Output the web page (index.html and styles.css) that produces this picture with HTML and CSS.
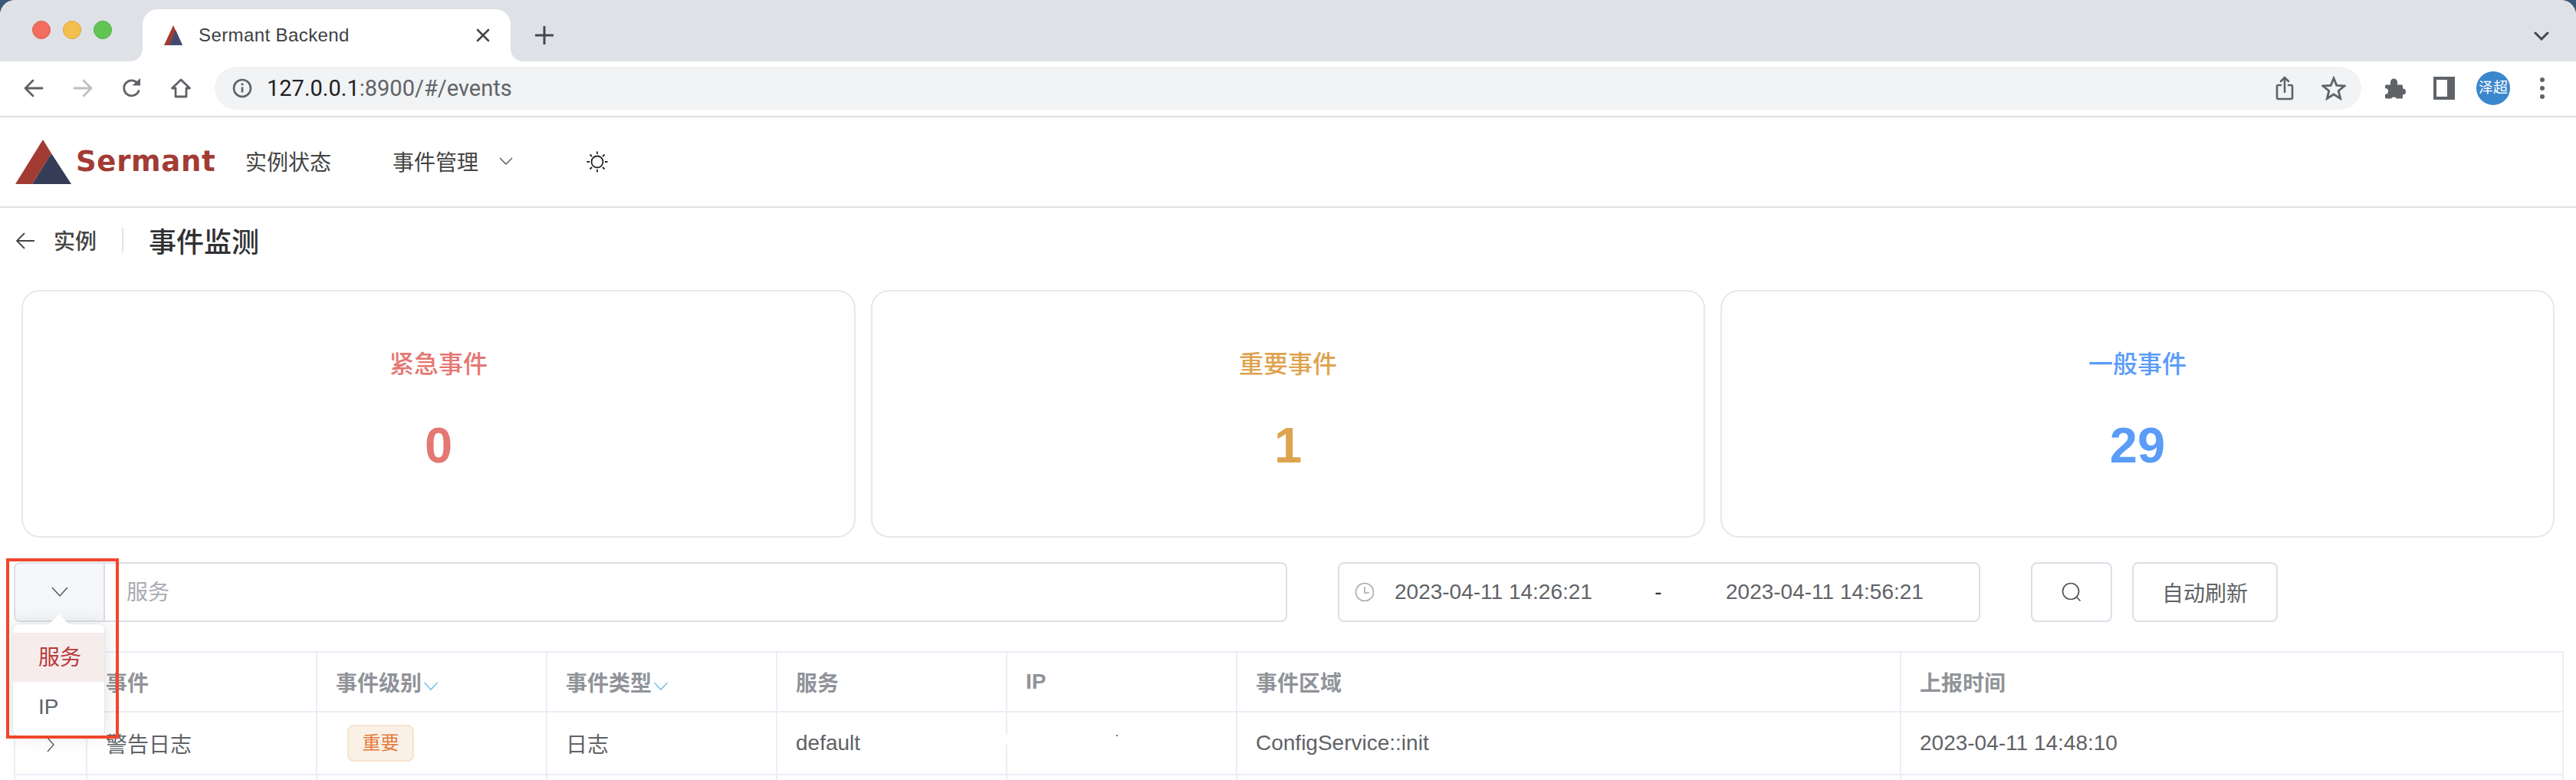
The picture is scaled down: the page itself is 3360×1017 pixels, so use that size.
FILE: index.html
```html
<!DOCTYPE html>
<html lang="zh">
  <head>
    <meta charset="UTF-8" />
    <title>Sermant Backend</title>
    <link rel="stylesheet" href="styles.css">
  </head>
  <body>
    <div class="window">
      <div class="tabstrip">
        <div class="lights">
          <span class="light light-red"></span>
          <span class="light light-yellow"></span>
          <span class="light light-green"></span>
        </div>
        <div class="tab">
          <svg class="favicon" viewBox="0 0 24 28"><polygon points="12,1 0,27 24,27" fill="#a23b34"/><polygon points="15,7 24,27 7,27" fill="#424c70"/></svg>
          <span class="tab-title">Sermant Backend</span>
          <svg class="tab-close" viewBox="0 0 18 18"><path d="M2 2l14 14M16 2L2 16" stroke="#45474b" stroke-width="2.6" stroke-linecap="round"/></svg>
        </div>
        <svg class="new-tab" viewBox="0 0 24 24"><path d="M12 1v22M1 12h22" stroke="#45474b" stroke-width="3" stroke-linecap="round"/></svg>
        <svg class="tab-list" viewBox="0 0 20 12"><path d="M2 2l8 8 8-8" fill="none" stroke="#45474b" stroke-width="3" stroke-linecap="round"/></svg>
      </div>

      <div class="toolbar">
        <span class="tool"><svg viewBox="0 0 28 28" width="28" height="28"><path d="M25 14H4M13 4L3 14l10 10" fill="none" stroke="#5f6368" stroke-width="2.8" stroke-linecap="round" stroke-linejoin="round"/></svg></span>
        <span class="tool"><svg viewBox="0 0 28 28" width="28" height="28"><path d="M3 14h21M15 4l10 10-10 10" fill="none" stroke="#bdbfc2" stroke-width="2.8" stroke-linecap="round" stroke-linejoin="round"/></svg></span>
        <span class="tool"><svg viewBox="0 0 28 28" width="28" height="28"><path d="M23 17.500A10 10 0 1 1 21 7" fill="none" stroke="#5f6368" stroke-width="2.800" stroke-linecap="round"/><polygon points="14.500,10.500 25,10.500 25,1" fill="#5f6368"/></svg></span>
        <span class="tool"><svg viewBox="0 0 28 28" width="28" height="28"><path d="M14 3L2.500 14H7v11h14V14h4.500z" fill="none" stroke="#5f6368" stroke-width="2.800" stroke-linejoin="round"/></svg></span>
        <div class="address">
          <svg class="info" viewBox="0 0 26 26"><circle cx="13" cy="13" r="11" fill="none" stroke="#5f6368" stroke-width="2.600"/><path d="M13 11.500v7" stroke="#5f6368" stroke-width="2.600"/><circle cx="13" cy="7.800" r="1.600" fill="#5f6368"/></svg>
          <span class="url"><span class="url-host">127.0.0.1</span>:8900/#/events</span>
          <span class="address-icons">
            <span class="tool"><svg viewBox="0 0 24 32" width="24" height="32"><path d="M7 12H3.500A1.500 1.500 0 0 0 2 13.500v15A1.500 1.500 0 0 0 3.500 30h17a1.500 1.500 0 0 0 1.500-1.500v-15a1.500 1.500 0 0 0-1.500-1.500H17M12 21V3M7 7l5-5 5 5" fill="none" stroke="#5f6368" stroke-width="2.600" stroke-linecap="round"/></svg></span>
            <span class="tool"><svg viewBox="0 0 32 32" width="32" height="32"><polygon points="16,3 19.800,12.300 30,13 22.200,19.500 24.700,29.500 16,24 7.300,29.500 9.800,19.500 2,13 12.200,12.300" fill="none" stroke="#5f6368" stroke-width="2.800" stroke-linejoin="miter"/></svg></span>
          </span>
        </div>
        <span class="tool tool-ext"><svg viewBox="0 0 30 30" width="30" height="30"><path d="M2 12a1.500 1.500 0 0 1 1.500-1.500H9V7a4.500 4.500 0 0 1 9 0v3.500h5.500A1.500 1.500 0 0 1 25 12v3.500a4 4 0 0 1 0 8V27a1.500 1.500 0 0 1-1.500 1.500H17a4 4 0 0 0-7 0H3.500A1.500 1.500 0 0 1 2 27v-4a4 4 0 0 0 2-7.500 4 4 0 0 0-2-.5z" fill="#5f6368"/></svg></span>
        <span class="tool"><svg viewBox="0 0 28 30" width="28" height="30"><rect width="28" height="30" fill="#5f6368"/><rect x="4" y="4" width="14" height="22" fill="#fff"/></svg></span>
        <span class="tool"><span class="avatar">泽超</span></span>
        <span class="tool"><span class="dots"><i></i><i></i><i></i></span></span>
      </div>

      <header class="app-header">
        <a class="logo">
          <svg class="logo-mark" viewBox="0 0 73 58"><polygon points="36,0 0,58 22,58 47,18" fill="#a23b34"/><polygon points="47,18 73,58 22,58" fill="#353d56"/></svg>
          <span class="logo-text">Sermant</span>
        </a>
        <nav class="app-nav">
          <span class="nav-item">实例状态</span>
          <span class="nav-item nav-events">事件管理
            <svg class="chev-sm" viewBox="0 0 18 10"><path d="M1 1l8 8 8-8" fill="none" stroke="#555" stroke-width="1.400"/></svg>
          </span>
        </nav>
        <svg class="sun" viewBox="0 0 28 28"><ellipse cx="14" cy="14" rx="7.500" ry="7.500" fill="none" stroke="#222" stroke-width="1.800"/><path d="M14 0.500v3.500M14 24v3.500M0.500 14H4M24 14h3.500M4.500 4.500l2.500 2.500M21 21l2.500 2.500M23.500 4.500L21 7M7 21l-2.500 2.500" stroke="#222" stroke-width="1.800"/></svg>
      </header>

      <div class="crumbs">
        <svg class="crumb-back" viewBox="0 0 24 24"><path d="M24 12H2M11 2L1 12l10 10" fill="none" stroke="#444" stroke-width="1.800"/></svg>
        <span class="crumb-link">实例</span>
        <span class="crumb-sep"></span>
        <h1 class="crumb-title">事件监测</h1>
      </div>

      <section class="cards">
        <div class="card card-red"><div class="card-label">紧急事件</div><div class="card-num">0</div></div>
        <div class="card card-orange"><div class="card-label">重要事件</div><div class="card-num">1</div></div>
        <div class="card card-blue"><div class="card-label">一般事件</div><div class="card-num">29</div></div>
      </section>

      <section class="filters">
        <div class="search-group">
          <div class="search-type">
            <svg class="chev-md" viewBox="0 0 22 14"><path d="M1 1l10 11L21 1" fill="none" stroke="#555" stroke-width="1.500"/></svg>
          </div>
          <div class="search-input">服务</div>
        </div>
        <div class="date-range">
          <svg class="clock" viewBox="0 0 26 26"><circle cx="13" cy="13" r="11.500" fill="none" stroke="#a8abb2" stroke-width="1.600"/><path d="M13 6v8h6" fill="none" stroke="#a8abb2" stroke-width="1.600"/></svg>
          <span class="date-val">2023-04-11 14:26:21</span>
          <span class="date-dash">-</span>
          <span class="date-val">2023-04-11 14:56:21</span>
        </div>
        <div class="btn btn-search">
          <svg viewBox="0 0 28 28" width="28" height="28"><circle cx="13" cy="13" r="10.500" fill="none" stroke="#555" stroke-width="1.700"/><path d="M20.500 20.500l5 5" stroke="#555" stroke-width="1.700"/></svg>
        </div>
        <div class="btn btn-refresh">自动刷新</div>

        <div class="dropdown">
          <span class="dropdown-arrow"></span>
          <div class="dropdown-item is-active">服务</div>
          <div class="dropdown-item">IP</div>
        </div>
        <div class="callout"></div>
      </section>

      <table class="events">
        <colgroup>
          <col class="col-expand"><col class="col-std"><col class="col-std"><col class="col-std"><col class="col-std"><col class="col-std"><col class="col-area"><col class="col-time">
        </colgroup>
        <thead>
          <tr>
            <th></th>
            <th>事件</th>
            <th>事件级别<svg class="chev-filter" viewBox="0 0 22 14"><path d="M1 1l10 11L21 1" fill="none" stroke="#5fb8e0" stroke-width="1.500"/></svg></th>
            <th>事件类型<svg class="chev-filter" viewBox="0 0 22 14"><path d="M1 1l10 11L21 1" fill="none" stroke="#5fb8e0" stroke-width="1.500"/></svg></th>
            <th>服务</th>
            <th>IP</th>
            <th>事件区域</th>
            <th>上报时间</th>
          </tr>
        </thead>
        <tbody>
          <tr>
            <td class="cell-expand"><svg class="chev-right" viewBox="0 0 10 20"><path d="M1 1l8 9-8 9" fill="none" stroke="#555" stroke-width="1.300"/></svg></td>
            <td>警告日志</td>
            <td><span class="tag">重要</span></td>
            <td>日志</td>
            <td>default</td>
            <td class="cell-ip"><span class="ip-mask"></span><span class="ip-dot"></span></td>
            <td>ConfigService::init</td>
            <td>2023-04-11 14:48:10</td>
          </tr>
          <tr class="row-next">
            <td></td><td></td><td></td><td></td><td></td><td></td><td></td><td></td>
          </tr>
        </tbody>
      </table>
    </div>
  </body>
</html>
```

FILE: styles.css
```css
* {
  box-sizing: border-box;
}
html,
body {
  margin: 0;
  height: 1017px;
  overflow: hidden;
}
body {
  background-color: #3b5878;
  font-family: "Liberation Sans", "Noto Sans CJK SC", sans-serif;
  color: #606266;
}
.window {
  width: 3360px;
  height: 1017px;
  overflow: hidden;
  background-color: #fff;
  border-radius: 20px 20px 0 0;
}

/* browser tabs */
.tabstrip {
  height: 80px;
  background-color: #dee1e6;
  display: flex;
  align-items: flex-start;
  padding-left: 42px;
  position: relative;
}
.lights {
  display: flex;
  gap: 16px;
  margin-top: 27px;
  width: 144px;
}
.light {
  width: 24px;
  height: 24px;
  border-radius: 50%;
}
.light-red {
  background-color: #f26d60;
  border: 1px solid #df5a4e;
}
.light-yellow {
  background-color: #f5bf4f;
  border: 1px solid #dea336;
}
.light-green {
  background-color: #61c554;
  border: 1px solid #4fae43;
}
.tab {
  width: 480px;
  height: 68px;
  margin-top: 12px;
  background-color: #fff;
  border-radius: 20px 20px 0 0;
  display: flex;
  align-items: center;
  padding: 0 24px 0 28px;
  position: relative;
}
.tab::before,
.tab::after {
  content: "";
  position: absolute;
  bottom: 0;
  width: 16px;
  height: 16px;
}
.tab::before {
  left: -16px;
  background: radial-gradient(circle at 0 0, #dee1e6 15.500px, #fff 16px);
}
.tab::after {
  right: -16px;
  background: radial-gradient(circle at 100% 0, #dee1e6 15.500px, #fff 16px);
}
.favicon {
  width: 24px;
  height: 28px;
  flex: none;
}
.tab-title {
  margin-left: 21px;
  font-size: 24px;
  letter-spacing: 0.4px;
  color: #3c4043;
  flex: 1;
}
.tab-close {
  width: 18px;
  height: 18px;
  margin-right: 3px;
}
.new-tab {
  width: 24px;
  height: 24px;
  margin: 34px 0 0 32px;
}
.tab-list {
  width: 20px;
  height: 12px;
  position: absolute;
  right: 35px;
  top: 41px;
}

/* browser toolbar */
.toolbar {
  height: 73px;
  display: flex;
  align-items: center;
  padding: 0 12px 2px;
  border-bottom: 2px solid #dfe0e4;
  background-color: #fff;
}
.tool {
  width: 64px;
  height: 56px;
  flex: none;
  display: flex;
  align-items: center;
  justify-content: center;
}
.address {
  flex: 1;
  height: 56px;
  margin: 0 12px;
  padding: 0 4px 0 23px;
  border-radius: 28px;
  background-color: #f1f3f4;
  display: flex;
  align-items: center;
}
.info {
  width: 26px;
  height: 26px;
  flex: none;
}
.url {
  margin-left: 19px;
  font-family: "Roboto", "Liberation Sans", sans-serif;
  font-size: 29px;
  color: #5f6368;
  flex: 1;
}
.url-host {
  color: #202124;
}
.address-icons {
  display: flex;
}
.avatar {
  width: 44px;
  height: 44px;
  border-radius: 50%;
  background-color: #3b87cd;
  color: #fff;
  font-size: 19px;
  line-height: 44px;
  text-align: center;
  white-space: nowrap;
}
.dots {
  display: flex;
  flex-direction: column;
  gap: 5px;
}
.dots i {
  display: block;
  width: 6px;
  height: 6px;
  border-radius: 50%;
  background-color: #5f6368;
}

/* app header */
.app-header {
  height: 118px;
  border-bottom: 2px solid #dfe0e4;
  display: flex;
  align-items: center;
  padding-left: 20px;
}
.logo {
  display: flex;
  align-items: center;
  width: 300px;
}
.logo-mark {
  width: 73px;
  height: 58px;
  flex: none;
}
.logo-text {
  margin: 0 0 0 6px;
  font-family: "DejaVu Sans", sans-serif;
  font-weight: bold;
  font-size: 37px;
  line-height: 40px;
  letter-spacing: 0.7px;
  color: #a23b34;
}
.app-nav {
  display: flex;
  gap: 80px;
  font-size: 28px;
  color: #444;
  margin-top: -2px;
}
.nav-events {
  display: flex;
  align-items: center;
}
.chev-sm {
  width: 18px;
  height: 10px;
  margin-left: 27px;
}
.sun {
  width: 28px;
  height: 28px;
  margin-left: 96px;
}

/* breadcrumb */
.crumbs {
  height: 86px;
  display: flex;
  align-items: center;
  padding: 0 0 2px 21px;
}
.crumb-back {
  width: 24px;
  height: 24px;
  margin-top: 2px;
}
.crumb-link {
  margin-left: 25px;
  font-size: 28px;
  font-weight: 500;
  color: #444;
}
.crumb-sep {
  width: 2px;
  height: 32px;
  margin: 0 33px 0 33px;
  background-color: #e2e3e8;
}
.crumb-title {
  margin: 0;
  font-size: 36px;
  font-weight: 500;
  color: #303133;
}

/* summary cards */
.cards {
  display: flex;
  gap: 20px;
  margin: 21px 28px 0;
}
.card {
  flex: 1;
  height: 323px;
  border: 2px solid #e7e8ee;
  border-radius: 24px;
  padding-top: 73px;
  text-align: center;
}
.card-label {
  font-size: 32px;
  line-height: 44px;
  font-weight: 500;
}
.card-num {
  margin-top: 44px;
  font-size: 65px;
  line-height: 80px;
  font-weight: bold;
}
.card-red {
  color: #e57772;
}
.card-orange {
  color: #dea34e;
}
.card-blue {
  color: #5a9cf8;
}

/* filter row */
.filters {
  display: flex;
  align-items: stretch;
  height: 78px;
  margin-top: 32px;
  padding-left: 18px;
  position: relative;
}
.search-group {
  width: 1661px;
  display: flex;
  border: 2px solid #dcdfe6;
  border-radius: 8px;
}
.search-type {
  width: 117px;
  border-right: 2px solid #dcdfe6;
  border-radius: 6px 0 0 6px;
  background-color: #f5f7fa;
  display: flex;
  align-items: center;
  justify-content: center;
}
.chev-md {
  width: 22px;
  height: 14px;
}
.search-input {
  flex: 1;
  padding-left: 28px;
  font-size: 28px;
  line-height: 76px;
  color: #a8abb2;
}
.date-range {
  width: 838px;
  margin-left: 66px;
  border: 2px solid #dcdfe6;
  border-radius: 8px;
  display: flex;
  align-items: center;
  padding-left: 20px;
  font-size: 28px;
}
.clock {
  width: 26px;
  height: 26px;
  margin-right: 26px;
  flex: none;
}
.date-val {
  width: 256px;
  white-space: nowrap;
}
.date-dash {
  width: 176px;
  text-align: center;
  color: #303133;
}
.btn {
  border: 2px solid #dcdfe6;
  border-radius: 8px;
  display: flex;
  align-items: center;
  justify-content: center;
  font-size: 28px;
}
.btn-search {
  width: 106px;
  margin-left: 66px;
}
.btn-refresh {
  width: 190px;
  margin-left: 26px;
}

/* popup over the filter row */
.dropdown {
  position: absolute;
  left: 16px;
  top: 80px;
  width: 121px;
  height: 147px;
  padding-top: 11px;
  background-color: #fff;
  border: 1px solid #e4e7ed;
  border-radius: 8px;
  box-shadow: 0 0 24px rgba(0, 0, 0, 0.12);
  font-size: 28px;
  z-index: 2;
}
.dropdown-arrow {
  position: absolute;
  left: 50px;
  top: -9px;
  width: 20px;
  height: 20px;
  background-color: #fff;
  transform: rotate(45deg);
}
.dropdown-item {
  position: relative;
  height: 64px;
  line-height: 66px;
  padding-left: 33px;
}
.dropdown-item.is-active {
  background-color: #f6ecec;
  color: #b83a3a;
}
.callout {
  position: absolute;
  left: 8px;
  top: -5px;
  width: 147px;
  height: 235px;
  border: 4px solid #f0462a;
  z-index: 3;
}

/* events table */
.events {
  width: 3324px;
  margin: 38px 0 0 18px;
  table-layout: fixed;
  border-collapse: collapse;
  font-size: 28px;
}
.col-expand {
  width: 94px;
}
.col-std {
  width: 300px;
}
.col-area {
  width: 866px;
}
.col-time {
  width: 864px;
}
.events th,
.events td {
  border: 2px solid #ebeef5;
  padding: 0 24px;
  text-align: left;
  white-space: nowrap;
}
.events th {
  height: 78px;
  font-weight: 600;
  color: #909399;
}
.events td {
  height: 82px;
}
.cell-expand {
  text-align: center !important;
}
.chev-filter {
  width: 20px;
  height: 12px;
  margin-left: 2px;
}
.chev-right {
  width: 10px;
  height: 20px;
  vertical-align: middle;
}
.tag {
  display: inline-block;
  margin-left: 15px;
  width: 87px;
  height: 48px;
  line-height: 44px;
  text-align: center;
  font-size: 24px;
  color: #e6783a;
  background-color: #faf0e6;
  border: 2px solid #f8e3d0;
  border-radius: 8px;
}
.cell-ip {
  position: relative;
}
.ip-mask {
  position: absolute;
  left: -2px;
  top: 29px;
  width: 6px;
  height: 13px;
  background-color: #fff;
}
.ip-dot {
  position: absolute;
  left: 142px;
  top: 29px;
  width: 2px;
  height: 2px;
  background-color: #777;
}
```
